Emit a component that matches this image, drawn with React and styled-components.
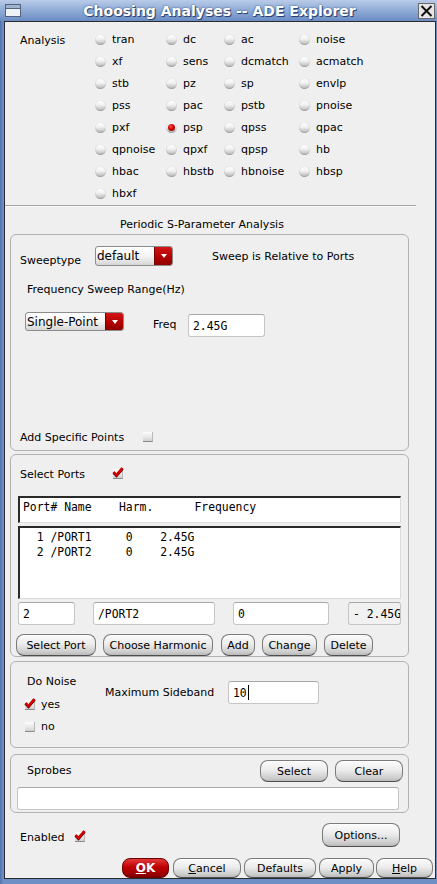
import styled, { createGlobalStyle, css } from 'styled-components';

const Global = createGlobalStyle`
  body {
    margin: 0;
    font-family: 'DejaVu Sans', 'Liberation Sans', sans-serif;
    font-size: 11px;
    color: #000;
  }
  * { box-sizing: border-box; }
`;

const Frame = styled.div`
  width: 437px;
  height: 884px;
  display: flex;
  flex-direction: column;
  padding: 0 1px 5px 4px;
  background: linear-gradient(90deg, #4f72ad, #6d8fc6 3px, #6d8fc6);
`;

const TitleBar = styled.div`
  height: 22px;
  margin-left: -4px;
  margin-right: -1px;
  display: flex;
  align-items: center;
  padding: 0 2px 0 5px;
  background: linear-gradient(#b9cbe8, #8fabd6 50%, #6b8dc4);
`;

const Title = styled.div`
  flex: 1;
  text-align: center;
  font-weight: bold;
  font-size: 14px;
  color: #fff;
  text-shadow: 1px 1px 0 #2e4470, 0 0 2px #2e4470;
`;

const Body = styled.div`
  flex: 1;
  background: #efefef;
  border: 1px solid #2b2b2b;
  display: flex;
  flex-direction: column;
`;

const AnalysisGrid = styled.div`
  display: grid;
  grid-template-columns: 75px 71px 58px 75px auto;
  grid-auto-rows: 22px;
  padding: 6px 0 0 15px;
`;

const GridLabel = styled.div`
  grid-row: 1;
  grid-column: 1;
  padding-top: 6px;
`;

const RadioItem = styled.label`
  display: flex;
  align-items: center;
  gap: 6px;
  grid-column: ${p => p.$col};
  white-space: nowrap;
`;

const RadioDot = styled.span`
  position: relative;
  width: 11px;
  height: 11px;
  border-radius: 50%;
  flex: none;
  background: linear-gradient(#ffffff, #f2f2f2 45%, #c9c9c9 80%, #a9a9a9);
  box-shadow: inset 0 0 0 1px rgba(0, 0, 0, 0.08);
  ${p => p.$on && css`
    &::after {
      content: '';
      position: absolute;
      left: 2px;
      top: 2px;
      width: 7px;
      height: 7px;
      border-radius: 50%;
      background: radial-gradient(circle at 40% 35%, #ff5050, #d00000 45%, #7a0000);
    }
  `}
`;

const Separator = styled.div`
  height: 2px;
  margin: 1px 19px 0 0;
  border-top: 1px solid #a4a4a4;
  border-bottom: 1px solid #fafafa;
`;

const SectionTitle = styled.div`
  height: 14px;
  line-height: 14px;
  margin-top: 11px;
  padding-left: 115px;
`;

const Group = styled.div`
  height: ${p => p.$h}px;
  margin: ${p => p.$top}px 26px 0 5px;
  border: 1px solid #b2b2b2;
  border-radius: 6px;
  display: flex;
  flex-direction: column;
`;

const Row = styled.div`
  display: flex;
  align-items: ${p => (p.$center ? 'center' : 'flex-start')};
  margin-top: ${p => p.$top || 0}px;
  padding-left: ${p => p.$left || 0}px;
  height: ${p => (p.$h ? `${p.$h}px` : 'auto')};
`;

const Column = styled.div`
  width: ${p => p.$w}px;
  flex: none;
`;

const Text = styled.span`
  display: block;
  line-height: 14px;
  white-space: nowrap;
  width: ${p => (p.$w ? `${p.$w}px` : 'auto')};
  margin-top: ${p => p.$top || 0}px;
  margin-left: ${p => p.$left || 0}px;
  flex: none;
`;

const Combo = styled.div`
  width: ${p => p.$w}px;
  height: ${p => p.$h}px;
  flex: none;
  display: flex;
  border: 1px solid #8c8c8c;
  border-radius: 3px;
  overflow: hidden;
  background: linear-gradient(#ffffff, #f4f4f4 50%, #d6d6d6);
  font-size: 12px;
`;

const ComboText = styled.span`
  flex: 1;
  padding-left: 1px;
  display: flex;
  align-items: center;
`;

const ComboArrow = styled.span`
  width: 18px;
  display: flex;
  align-items: center;
  justify-content: center;
  background: linear-gradient(#d41414, #b00000 60%, #8e0000);
  border-left: 1px solid #7a0000;
  &::before {
    content: '';
    border-left: 3px solid transparent;
    border-right: 3px solid transparent;
    border-top: 4px solid #fff;
  }
`;

const Field = styled.div`
  width: ${p => p.$w}px;
  height: 23px;
  margin-left: ${p => p.$left || 0}px;
  margin-top: ${p => p.$top || 0}px;
  flex: none;
  border: 1px solid #c6c6c6;
  border-top-color: #a8a8a8;
  border-radius: 3px;
  background: ${p => (p.$off ? '#f1f1f1' : '#fff')};
  font-family: 'DejaVu Sans Mono', 'Liberation Mono', monospace;
  font-size: 11.4px;
  display: flex;
  align-items: center;
  padding-left: 4px;
  white-space: nowrap;
  overflow: hidden;
`;

const Caret = styled.span`
  width: 1px;
  height: 15px;
  background: #000;
  margin-left: 1px;
`;

const Box = styled.span`
  position: relative;
  width: 10px;
  height: 10px;
  flex: none;
  margin-top: ${p => p.$top || 0}px;
  background: linear-gradient(#fdfdfd, #e6e6e6 60%, #cfcfcf);
  border-bottom: 1px solid #8a8a8a;
  border-right: 1px solid #b8b8b8;
  svg {
    position: absolute;
    left: -1px;
    top: -2px;
  }
`;

const Check = () => (
  <svg width="12" height="11" viewBox="0 0 12 11">
    <path d="M1.5 5.5 L4.5 8.5 L10.5 1.5" fill="none" stroke="#5a0000" strokeWidth="3" />
    <path d="M1.5 5 L4.5 8 L10.5 1" fill="none" stroke="#e00000" strokeWidth="2.2" />
  </svg>
);

const CheckBox = ({ on, ...rest }) => (
  <Box {...rest}>{on && <Check />}</Box>
);

const Listing = styled.div`
  width: 383px;
  height: ${p => p.$h}px;
  margin: ${p => p.$top}px 0 0 7px;
  background: #fff;
  border-top: 2px solid #2a2a2a;
  border-left: 2px solid #2a2a2a;
  border-right: 1px solid #dcdcdc;
  border-bottom: 1px solid #dcdcdc;
  padding: 2px 0 0 3px;
  font-family: 'DejaVu Sans Mono', 'Liberation Mono', monospace;
  font-size: 11.4px;
  line-height: 15px;
  white-space: pre;
`;

const Button = styled.button`
  height: ${p => p.$h || 22}px;
  width: ${p => p.$w}px;
  margin-left: ${p => p.$left || 0}px;
  margin-right: ${p => p.$right || 0}px;
  flex: none;
  padding: 0;
  font-family: 'DejaVu Sans', 'Liberation Sans', sans-serif;
  font-size: 11px;
  color: #000;
  border: 1px solid #7b7b7b;
  border-bottom-color: #4e4e4e;
  border-radius: 8px;
  background: linear-gradient(#fbfbfb, #ececec 45%, #cdcdcd 85%, #b9b9b9);
  box-shadow: inset 0 1px 0 #fff;
  u { text-decoration: underline; }
  ${p => p.$primary && css`
    color: #fff;
    font-weight: bold;
    font-size: 12px;
    border-color: #6a0000;
    background: linear-gradient(#e23a3a, #c00000 45%, #9a0000 85%, #7c0000);
    box-shadow: none;
  `}
`;

const Spacer = styled.div`
  flex: 1;
`;

const WinIcon = () => (
  <svg width="16" height="13" viewBox="0 0 16 13">
    <rect x="0.5" y="0.5" width="15" height="12" fill="#eef1f6" stroke="#51637f" />
    <rect x="1" y="1" width="14" height="3" fill="#9fb2d0" />
    <line x1="1" y1="4.5" x2="15" y2="4.5" stroke="#51637f" />
  </svg>
);

const CloseIcon = () => (
  <svg width="17" height="16" viewBox="0 0 17 16">
    <rect x="0.5" y="0.5" width="16" height="15" fill="#e6e6e6" stroke="#6a6a6a" />
    <path d="M3.5 3 L13.5 13 M13.5 3 L3.5 13" stroke="#111" strokeWidth="2" />
  </svg>
);

const analyses = [
  ['tran', 'dc', 'ac', 'noise'],
  ['xf', 'sens', 'dcmatch', 'acmatch'],
  ['stb', 'pz', 'sp', 'envlp'],
  ['pss', 'pac', 'pstb', 'pnoise'],
  ['pxf', 'psp', 'qpss', 'qpac'],
  ['qpnoise', 'qpxf', 'qpsp', 'hb'],
  ['hbac', 'hbstb', 'hbnoise', 'hbsp'],
  ['hbxf'],
];

const App = () => (
  <Frame>
    <Global />
    <TitleBar>
      <WinIcon />
      <Title>Choosing Analyses -- ADE Explorer</Title>
      <CloseIcon />
    </TitleBar>
    <Body>
      <AnalysisGrid>
        <GridLabel>Analysis</GridLabel>
        {analyses.map((row, r) =>
          row.map((name, c) => (
            <RadioItem key={name} $col={c + 2} style={{ gridRow: r + 1 }}>
              <RadioDot $on={name === 'psp'} />
              {name}
            </RadioItem>
          ))
        )}
      </AnalysisGrid>
      <Separator />
      <SectionTitle>Periodic S-Parameter Analysis</SectionTitle>

      <Group $h={217} $top={2}>
        <Row $top={11} $left={9} $h={22}>
          <Text $w={75} $top={8}>Sweeptype</Text>
          <Combo $w={78} $h={20}>
            <ComboText>default</ComboText>
            <ComboArrow />
          </Combo>
          <Text $left={39} $top={4}>Sweep is Relative to Ports</Text>
        </Row>
        <Row $top={15} $left={16}>
          <Text>Frequency Sweep Range(Hz)</Text>
        </Row>
        <Row $top={15} $left={14}>
          <Combo $w={99} $h={19}>
            <ComboText>Single-Point</ComboText>
            <ComboArrow />
          </Combo>
          <Text $w={35} $left={29} $top={6}>Freq</Text>
          <Field $w={77} $top={2}>2.45G</Field>
        </Row>
        <Spacer />
        <Row $left={9} style={{ marginBottom: 5 }}>
          <Text $w={123}>Add Specific Points</Text>
          <CheckBox $top={1} />
        </Row>
      </Group>

      <Group $h={203} $top={3}>
        <Row $top={13} $left={9}>
          <Text $w={93}>Select Ports</Text>
          <CheckBox on $top={1} />
        </Row>
        <Listing $h={27} $top={14}>{'Port# Name    Harm.      Frequency'}</Listing>
        <Listing $h={74} $top={3}>
          {'  1 /PORT1     0    2.45G\n  2 /PORT2     0    2.45G'}
        </Listing>
        <Row $top={3} $left={7}>
          <Field $w={57}>2</Field>
          <Field $w={122} $left={18}>/PORT2</Field>
          <Field $w={96} $left={18}>0</Field>
          <Field $w={53} $left={19} $off>- 2.45G</Field>
        </Row>
        <Row $top={9} $left={5}>
          <Button $w={80}>Select Port</Button>
          <Button $w={110} $left={7}>Choose Harmonic</Button>
          <Button $w={34} $left={8}>Add</Button>
          <Button $w={55} $left={7}>Change</Button>
          <Button $w={49} $left={7}>Delete</Button>
        </Row>
      </Group>

      <Group $h={87} $top={4}>
        <Row $left={14}>
          <Column $w={80}>
            <Text $left={2} $top={13}>Do Noise</Text>
            <Row $top={9} $center>
              <CheckBox on />
              <Text $left={6}>yes</Text>
            </Row>
            <Row $top={8} $center>
              <CheckBox />
              <Text $left={6}>no</Text>
            </Row>
          </Column>
          <Text $w={123} $top={24}>Maximum Sideband</Text>
          <Field $w={91} $top={19}>10<Caret /></Field>
        </Row>
      </Group>

      <Group $h={59} $top={6}>
        <Row $top={5} $left={16}>
          <Text $top={4}>Sprobes</Text>
          <Spacer />
          <Button $w={68}>Select</Button>
          <Button $w={68} $left={7} $right={5}>Clear</Button>
        </Row>
        <Row $top={5} $left={6}>
          <Field $w={382} />
        </Row>
      </Group>

      <Row $top={10} $left={15}>
        <Text $w={55} $top={8}>Enabled</Text>
        <CheckBox on $top={9} />
        <Spacer />
        <Button $w={78} $h={24} $right={35}>Options...</Button>
      </Row>

      <Row $top={11}>
        <Spacer />
        <Button $primary $w={47} $h={20}><u>O</u>K</Button>
        <Button $w={68} $h={20} $left={4}><u>C</u>ancel</Button>
        <Button $w={72} $h={20} $left={3}>Defaults</Button>
        <Button $w={55} $h={20} $left={3}>Apply</Button>
        <Button $w={57} $h={20} $left={2} $right={2}><u>H</u>elp</Button>
      </Row>
    </Body>
  </Frame>
);

export default App;
